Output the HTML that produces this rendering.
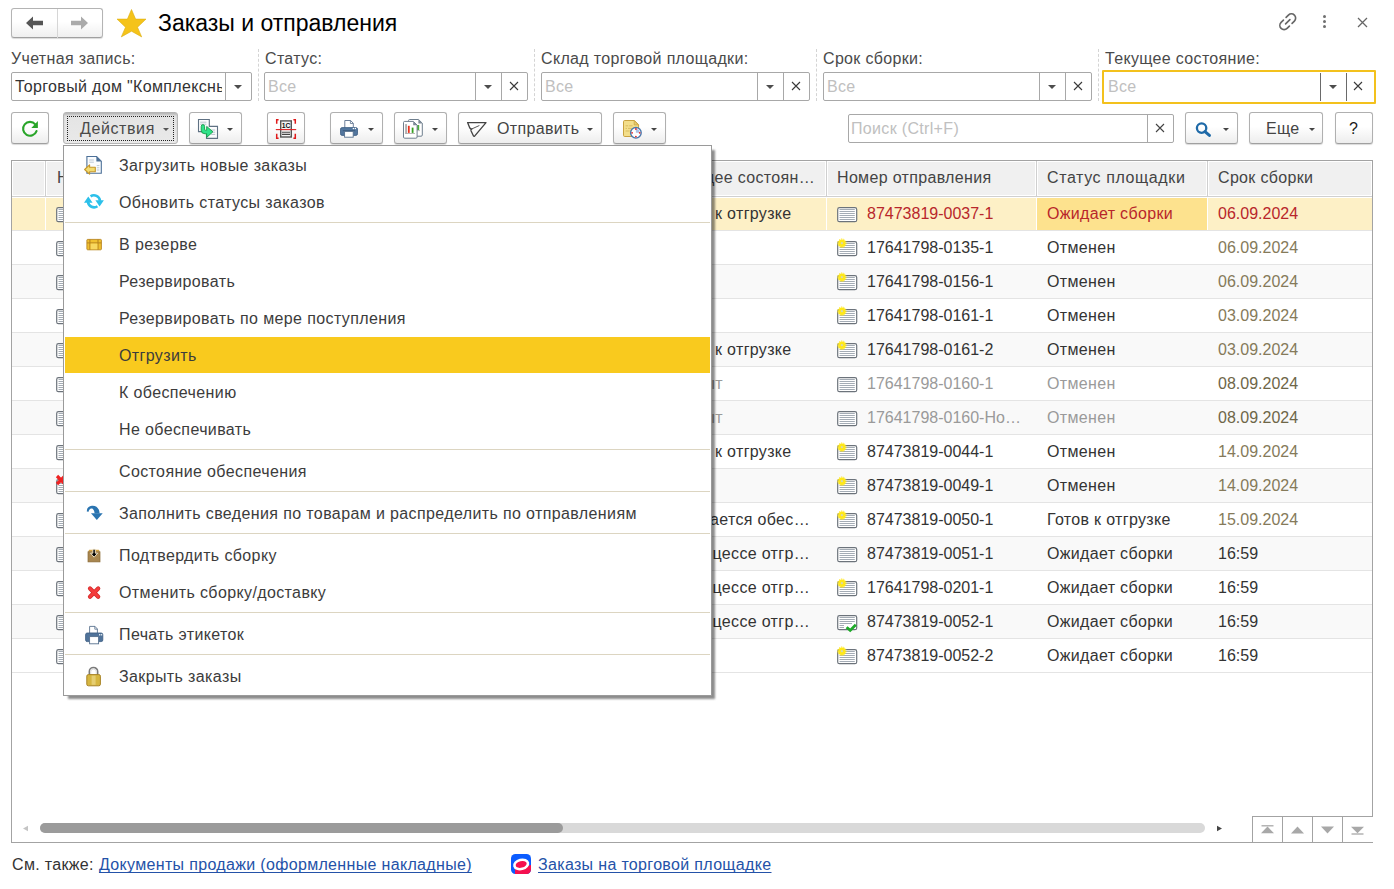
<!DOCTYPE html>
<html><head><meta charset="utf-8">
<style>
*{box-sizing:border-box}
html,body{margin:0;padding:0}
body{width:1394px;height:889px;position:relative;overflow:hidden;background:#fff;font-family:"Liberation Sans",sans-serif;font-size:16px;color:#333;letter-spacing:0.33px}
.a{position:absolute;white-space:nowrap;line-height:18px;margin-top:1px}
.btn{position:absolute;top:112px;height:32px;border:1px solid #b0b0b0;border-bottom-color:#a0a0a0;border-radius:3px;background:linear-gradient(#fff 0%,#fff 45%,#ededed 100%);box-shadow:0 1px 1px rgba(0,0,0,.15)}
.fld{position:absolute;top:72px;height:29px;border:1px solid #a8a8a8;border-radius:2px;background:#fff;overflow:hidden}
.lbl{position:absolute;top:50px;line-height:18px;color:#4a4a4a;white-space:nowrap}
.sep{position:absolute;top:49px;height:52px;width:0;border-left:1px dashed #d4d4d4}
.dv{position:absolute;top:0;bottom:0;width:1px;background:#a8a8a8}
.ph{position:absolute;left:3px;top:5px;line-height:18px;color:#c0c0c0;white-space:nowrap}
.dd{position:absolute;width:0;height:0;border-left:4px solid transparent;border-right:4px solid transparent;border-top:4px solid #4d4d4d}
.x{position:absolute;width:12px;height:12px}
</style></head><body>

<!-- header -->
<div style="position:absolute;left:11px;top:8px;width:92px;height:30px;border:1px solid #b4b4b4;border-bottom-color:#a0a0a0;border-radius:3px;background:linear-gradient(#fff 0%,#fff 45%,#efefef 100%);box-shadow:0 1px 1px rgba(0,0,0,.15)"></div>
<div style="position:absolute;left:57px;top:9px;width:1px;height:29px;background:#d6d6d6"></div>
<svg style="position:absolute;left:25px;top:15px" width="20" height="16" viewBox="0 0 20 16"><path d="M1 8 L8 1.5 L8 5.8 L18 5.8 L18 10.2 L8 10.2 L8 14.5 Z" fill="#555"/></svg>
<svg style="position:absolute;left:69px;top:15px" width="20" height="16" viewBox="0 0 20 16"><path d="M19 8 L12 1.5 L12 5.8 L2 5.8 L2 10.2 L12 10.2 L12 14.5 Z" fill="#aaa"/></svg>
<svg style="position:absolute;left:116px;top:8px" width="31" height="30" viewBox="0 0 31 30"><path d="M15.5 1.5 L19.6 11.1 L30 11.1 L21.5 19.2 L25.7 28.9 L15.5 23.2 L5.3 28.9 L9.5 19.2 L1 11.1 L11.4 11.1 Z" fill="#f5c31a" stroke="#dcae10" stroke-width="0.6" stroke-linejoin="miter"/></svg>
<div class="a" style="left:158px;top:9px;font-size:23px;line-height:27px;color:#000;letter-spacing:0">Заказы и отправления</div>

<svg style="position:absolute;left:1276px;top:10px" width="23.5" height="23.5" viewBox="0 0 20 20"><g transform="rotate(-45 10 10)" fill="none" stroke="#666" stroke-width="1.4" stroke-linecap="round"><path d="M8.4 6.4 H5.6 A3.6 3.6 0 0 0 5.6 13.6 H8.4"/><path d="M11.6 6.4 H14.4 A3.6 3.6 0 0 1 14.4 13.6 H11.6"/><path d="M7.4 10 H12.6"/></g></svg>
<div style="position:absolute;left:1323px;top:15px;width:3px;height:3px;border-radius:50%;background:#707070"></div>
<div style="position:absolute;left:1323px;top:20px;width:3px;height:3px;border-radius:50%;background:#707070"></div>
<div style="position:absolute;left:1323px;top:25px;width:3px;height:3px;border-radius:50%;background:#707070"></div>
<svg style="position:absolute;left:1357px;top:17px" width="11" height="11" viewBox="0 0 11 11"><path d="M1 1 L10 10 M10 1 L1 10" stroke="#666" stroke-width="1.25"/></svg>

<!-- filters -->
<div class="lbl" style="left:11px">Учетная запись:</div>
<div class="fld" style="left:11px;width:241px"><div class="a" style="left:3px;top:4px;color:#333;width:207px;overflow:hidden">Торговый дом "Комплексный</div><div class="dv" style="left:213px"></div><div class="dd" style="left:222px;top:12px"></div></div>
<div class="sep" style="left:258px"></div>

<div class="lbl" style="left:265px">Статус:</div>
<div class="fld" style="left:264px;width:264px"><div class="ph">Все</div><div class="dv" style="left:210px"></div><div class="dd" style="left:219px;top:12px"></div><div class="dv" style="left:236px"></div><svg class="x" style="left:243px;top:7px" viewBox="0 0 12 12"><path d="M2 2 L10 10 M10 2 L2 10" stroke="#3a3a3a" stroke-width="1.1"/></svg></div>
<div class="sep" style="left:534px"></div>

<div class="lbl" style="left:541px">Склад торговой площадки:</div>
<div class="fld" style="left:541px;width:269px"><div class="ph">Все</div><div class="dv" style="left:215px"></div><div class="dd" style="left:224px;top:12px"></div><div class="dv" style="left:241px"></div><svg class="x" style="left:248px;top:7px" viewBox="0 0 12 12"><path d="M2 2 L10 10 M10 2 L2 10" stroke="#3a3a3a" stroke-width="1.1"/></svg></div>
<div class="sep" style="left:816px"></div>

<div class="lbl" style="left:823px">Срок сборки:</div>
<div class="fld" style="left:823px;width:269px"><div class="ph">Все</div><div class="dv" style="left:215px"></div><div class="dd" style="left:224px;top:12px"></div><div class="dv" style="left:241px"></div><svg class="x" style="left:248px;top:7px" viewBox="0 0 12 12"><path d="M2 2 L10 10 M10 2 L2 10" stroke="#3a3a3a" stroke-width="1.1"/></svg></div>
<div class="sep" style="left:1098px"></div>

<div class="lbl" style="left:1105px">Текущее состояние:</div>
<div class="fld" style="left:1102px;top:70px;width:274px;height:34px;border:2px solid #f3c11d;border-radius:1px"><div class="ph" style="left:4px;top:6px">Все</div><div class="dv" style="left:216px;top:1px;bottom:1px;background:#6a6a6a"></div><div class="dd" style="left:225px;top:13px"></div><div class="dv" style="left:242px;top:1px;bottom:1px;background:#6a6a6a"></div><svg class="x" style="left:248px;top:8px" viewBox="0 0 12 12"><path d="M2 2 L10 10 M10 2 L2 10" stroke="#3a3a3a" stroke-width="1.1"/></svg></div>


<div class="btn" style="left:11px;width:38px"></div>
<svg style="position:absolute;left:21px;top:120px" width="18" height="18" viewBox="0 0 18 18"><path d="M15.52 11.05 A6.9 6.9 0 1 1 14.29 4.36" fill="none" stroke="#2aa52a" stroke-width="2.1" stroke-linecap="round"/><path d="M10.3 7.9 L16.9 7.9 L16.9 1.1 Z" fill="#2aa52a"/></svg>

<div style="position:absolute;left:63px;top:112px;width:115px;height:32px;border:1px solid #b4b4b4;border-radius:3px;background:linear-gradient(#d0d0d0,#e4e4e4 3px,#e9e9e9);box-shadow:inset 0 2px 2px rgba(0,0,0,.12)"></div>
<div style="position:absolute;left:67px;top:116px;width:107px;height:25px;border:1px dotted #222"></div>
<div class="a" style="left:80px;top:119px;color:#4a4a4a;letter-spacing:0.6px">Действия</div>
<div class="dd" style="left:163px;top:128px;border-left-width:3px;border-right-width:3px;border-top-width:3px;border-top-color:#555"></div>

<div class="btn" style="left:189px;width:53px"></div>
<svg style="position:absolute;left:197px;top:118px" width="22" height="22" viewBox="0 0 22 22"><path d="M1.5 1.5 H12.3 V8.4 H20.5 V20.4 H9.5 V13.6 H1.5 Z" fill="#fbfcfd" stroke="#5f7183" stroke-width="1.1"/><path d="M3.2 4.2 H9.4 M3.2 6.2 H9.4 M14.2 12 H18.2 M14.2 14.2 H18.2 M14.2 16.4 H18.2" stroke="#a7b3bf" stroke-width="0.8"/><path d="M4.2 8.6 Q4.2 6.6 5.9 6.6 Q7.6 6.6 7.6 8.6 L7.6 11.6 Q7.6 12.2 8.3 12.2 L9.7 12.2 L9.7 8.4 L15.9 13.8 L9.7 19.4 L9.7 15.8 L8.1 15.8 Q4.2 15.8 4.2 12.2 Z" fill="#2fe38a" stroke="#139a45" stroke-width="0.9" stroke-linejoin="round"/></svg>
<div class="dd" style="left:227px;top:128px;border-left-width:3px;border-right-width:3px;border-top-width:3px;border-top-color:#444"></div>

<div class="btn" style="left:267px;width:38px"></div>
<svg style="position:absolute;left:275px;top:118px" width="22" height="22" viewBox="0 0 22 22"><path d="M1.7 5.8 V1.7 H3.6 M18.4 1.7 H20.3 V5.8 M1.7 15.8 V20.3 H3.6 M18.4 20.3 H20.3 V15.8" fill="none" stroke="#e01a1a" stroke-width="1.5"/><rect x="5.7" y="2.9" width="10.6" height="16.1" fill="#f4f4f4" stroke="#555" stroke-width="1.4"/><text x="11" y="9.8" font-family="Liberation Sans" font-weight="bold" font-size="6.8" text-anchor="middle" fill="#111" letter-spacing="-0.2">1C</text><path d="M7 14.2 h8 M7 16.4 h8" stroke="#444" stroke-width="1.1"/><path d="M0.8 11.6 H21.2" stroke="#e02020" stroke-width="1.1"/></svg>

<div class="btn" style="left:330px;width:53px"></div>
<svg style="position:absolute;left:339px;top:119px" width="21" height="21" viewBox="0 0 21 21"><path d="M5.8 1.5 H11.6 L14.3 4.3 V10 H5.8 Z" fill="#fff" stroke="#5d7390" stroke-width="0.9"/><path d="M11.4 1.5 V4.5 H14.3" fill="none" stroke="#5d7390" stroke-width="0.8"/><rect x="1.5" y="8.6" width="17" height="7.8" rx="1.6" fill="#52769e" stroke="#3b5c82" stroke-width="0.8"/><path d="M3.8 11.7 H16.2" stroke="#3b5a7e" stroke-width="1"/><rect x="5.6" y="12.4" width="8.6" height="5.8" fill="#fff" stroke="#56708e" stroke-width="0.9"/><circle cx="14.4" cy="9.6" r="0.75" fill="#fff"/><circle cx="16.4" cy="9.6" r="0.75" fill="#fff"/></svg>
<div class="dd" style="left:368px;top:128px;border-left-width:3px;border-right-width:3px;border-top-width:3px;border-top-color:#444"></div>

<div class="btn" style="left:394px;width:53px"></div>
<svg style="position:absolute;left:402px;top:118px" width="22" height="22" viewBox="0 0 22 22"><path d="M7.7 1.5 H16.6 L20.3 5.2 V17 Q20.3 18.2 19.1 18.2 H7.7 Q6.5 18.2 6.5 17 V2.7 Q6.5 1.5 7.7 1.5 Z" fill="#fff" stroke="#6f7f8e" stroke-width="1"/><path d="M16.4 1.6 V5.4 H20.2 Z" fill="#7d8a97"/><rect x="15" y="7" width="2.2" height="5.2" fill="#4caf3a"/><rect x="14.6" y="12.2" width="3.4" height="0.9" fill="#bbb"/><path d="M2.7 3.4 H11.4 L15.1 7.1 V19 Q15.1 20.2 13.9 20.2 H2.7 Q1.5 20.2 1.5 19 V4.6 Q1.5 3.4 2.7 3.4 Z" fill="#fff" stroke="#6f7f8e" stroke-width="1"/><path d="M11.2 3.5 V7.3 H15 Z" fill="#7d8a97"/><rect x="3.2" y="6.1" width="1.7" height="9.7" fill="#a8a8a8"/><rect x="5.9" y="7.8" width="1.8" height="7.1" fill="#e8321e"/><rect x="9.7" y="9.6" width="1.8" height="5.3" fill="#34a020"/><rect x="3.2" y="15.1" width="9.8" height="0.8" fill="#a8a8a8"/></svg>
<div class="dd" style="left:432px;top:128px;border-left-width:3px;border-right-width:3px;border-top-width:3px;border-top-color:#444"></div>

<div class="btn" style="left:458px;width:144px"></div>
<svg style="position:absolute;left:466px;top:120px" width="22" height="19" viewBox="0 0 22 19"><path d="M1.6 2.6 H20 L8.6 16.1 Q8 16.8 7.5 16 L5 10.8 Q4.6 9.6 5.9 8.9 Q4.4 9.2 3.8 7.9 Z" fill="none" stroke="#444" stroke-width="1.35" stroke-linejoin="round"/><path d="M5.9 8.9 L13.4 5.5" stroke="#444" stroke-width="0.9"/></svg>
<div class="a" style="left:497px;top:119px;color:#444">Отправить</div>
<div class="dd" style="left:587px;top:128px;border-left-width:3px;border-right-width:3px;border-top-width:3px;border-top-color:#444"></div>

<div class="btn" style="left:613px;width:53px"></div>
<svg style="position:absolute;left:622px;top:119px" width="21" height="21" viewBox="0 0 21 21"><path d="M2.7 1.5 H12.4 L16.6 5.7 V16.3 Q16.6 17.5 15.4 17.5 H2.7 Q1.5 17.5 1.5 16.3 V2.7 Q1.5 1.5 2.7 1.5 Z" fill="#f3de8a" stroke="#c9a240" stroke-width="1"/><path d="M12.2 1.7 V5.9 H16.4 Z" fill="#e8cc6c" stroke="#c9a240" stroke-width="0.7"/><path d="M3.6 6.8 H6.2 M7.2 6.8 H10.6 M3.6 9.4 H5 M6 9.4 H9.6 M3.6 12 H7.6" stroke="#d6b85c" stroke-width="0.9"/><circle cx="13.9" cy="13.8" r="5.3" fill="#fff" stroke="#4a78ad" stroke-width="1.4"/><path d="M13.9 13.8 V10 A3.8 3.8 0 0 1 17.7 13.8 Z" fill="#a9c1e6"/><circle cx="13.9" cy="10" r="0.9" fill="#e02828"/><circle cx="17.7" cy="13.8" r="0.9" fill="#e02828"/><circle cx="10.1" cy="13.8" r="0.9" fill="#e02828"/><circle cx="13.9" cy="17.6" r="0.9" fill="#e02828"/></svg>
<div class="dd" style="left:651px;top:128px;border-left-width:3px;border-right-width:3px;border-top-width:3px;border-top-color:#444"></div>

<div class="fld" style="left:848px;top:114px;width:326px;height:29px"><div class="ph" style="left:2px;top:5px">Поиск (Ctrl+F)</div><div class="dv" style="left:298px"></div><svg class="x" style="left:306px;top:8px;width:10px;height:10px" viewBox="0 0 10 10"><path d="M1 1 L9 9 M9 1 L1 9" stroke="#444" stroke-width="1.1"/></svg></div>

<div class="btn" style="left:1185px;width:53px"></div>
<svg style="position:absolute;left:1195px;top:122px" width="17" height="15" viewBox="0 0 17 15"><circle cx="6.6" cy="6.1" r="4.7" fill="none" stroke="#1f6aa8" stroke-width="2.3"/><path d="M10 9.6 L14.4 13.4" stroke="#1f6aa8" stroke-width="3" stroke-linecap="round"/></svg>
<div class="dd" style="left:1223px;top:128px;border-left-width:3px;border-right-width:3px;border-top-width:3px;border-top-color:#444"></div>

<div class="btn" style="left:1249px;width:74px"></div>
<div class="a" style="left:1266px;top:119px;color:#444">Еще</div>
<div class="dd" style="left:1309px;top:128px;border-left-width:3px;border-right-width:3px;border-top-width:3px;border-top-color:#444"></div>

<div class="btn" style="left:1335px;width:38px"></div>
<div class="a" style="left:1349px;top:119px;color:#1a1a1a">?</div>


<!--TABLE-->
<div style="position:absolute;left:11px;top:160px;width:1362px;height:683px;border:1px solid #a3a3a3;background:#fff"></div>
<div style="position:absolute;left:12px;top:161px;width:1360px;height:35px;background:#f0f0f0;border:1px solid #fff;border-bottom:1px solid #fff"></div>
<div style="position:absolute;left:12px;top:196px;width:1360px;height:1px;background:#d0d0d0"></div>
<div style="position:absolute;left:44px;top:161px;width:3px;height:35px;background:#fff"></div>
<div style="position:absolute;left:45px;top:161px;width:1px;height:35px;background:#cfcfcf"></div>
<div style="position:absolute;left:825px;top:161px;width:3px;height:35px;background:#fff"></div>
<div style="position:absolute;left:826px;top:161px;width:1px;height:35px;background:#cfcfcf"></div>
<div style="position:absolute;left:1035px;top:161px;width:3px;height:35px;background:#fff"></div>
<div style="position:absolute;left:1036px;top:161px;width:1px;height:35px;background:#cfcfcf"></div>
<div style="position:absolute;left:1206px;top:161px;width:3px;height:35px;background:#fff"></div>
<div style="position:absolute;left:1207px;top:161px;width:1px;height:35px;background:#cfcfcf"></div>
<div class="a" style="left:57px;top:168px;color:#444">Номер</div>
<div class="a" style="left:615px;top:168px;width:200px;text-align:right;color:#444">Текущее состоян…</div>
<div class="a" style="left:837px;top:168px;color:#444">Номер отправления</div>
<div class="a" style="left:1047px;top:168px;color:#444;letter-spacing:0.6px">Статус площадки</div>
<div class="a" style="left:1218px;top:168px;color:#444">Срок сборки</div>
<div style="position:absolute;left:12px;top:197px;width:1360px;height:33px;background:#fdf0c6"></div>
<div style="position:absolute;left:12px;top:230px;width:1360px;height:1px;background:#e4e4e4"></div>
<div style="position:absolute;left:1037px;top:198px;width:170px;height:32px;background:#fde28e"></div>
<div style="position:absolute;left:45px;top:197px;width:1px;height:33px;background:#fff"></div>
<div style="position:absolute;left:826px;top:197px;width:1px;height:33px;background:#fff"></div>
<div style="position:absolute;left:1036px;top:197px;width:1px;height:33px;background:#fff"></div>
<div style="position:absolute;left:1207px;top:197px;width:1px;height:33px;background:#fff"></div>
<div style="position:absolute;left:12px;top:197px;width:1360px;height:1px;background:#fff"></div>
<svg style="position:absolute;left:56px;top:207px;overflow:visible" width="22" height="18" viewBox="0 0 22 18"><rect x="0.7" y="0.7" width="19" height="14" rx="1.8" fill="#fff" stroke="#6c737b" stroke-width="1.2"/><path d="M2.5 2.5 H17.8" stroke="#9aa3ad" stroke-width="0.9"/><path d="M2.5 4.5 H17.8" stroke="#9aa3ad" stroke-width="0.9"/><path d="M2.5 6.5 H17.8" stroke="#9aa3ad" stroke-width="0.9"/><path d="M2.5 8.5 H17.8" stroke="#9aa3ad" stroke-width="0.9"/><path d="M2.5 10.5 H17.8" stroke="#9aa3ad" stroke-width="0.9"/><path d="M2.5 12.5 H17.8" stroke="#9aa3ad" stroke-width="0.9"/></svg>
<div class="a" style="left:715px;top:204px;color:#333">к отгрузке</div>
<svg style="position:absolute;left:837px;top:207px;overflow:visible" width="22" height="18" viewBox="0 0 22 18"><rect x="0.7" y="0.7" width="19" height="14" rx="1.8" fill="#fff" stroke="#6c737b" stroke-width="1.2"/><path d="M2.5 2.5 H17.8" stroke="#9aa3ad" stroke-width="0.9"/><path d="M2.5 4.5 H17.8" stroke="#9aa3ad" stroke-width="0.9"/><path d="M2.5 6.5 H17.8" stroke="#9aa3ad" stroke-width="0.9"/><path d="M2.5 8.5 H17.8" stroke="#9aa3ad" stroke-width="0.9"/><path d="M2.5 10.5 H17.8" stroke="#9aa3ad" stroke-width="0.9"/><path d="M2.5 12.5 H17.8" stroke="#9aa3ad" stroke-width="0.9"/></svg>
<div class="a" style="left:867px;top:204px;color:#b8262b;letter-spacing:0">87473819-0037-1</div>
<div class="a" style="left:1047px;top:204px;color:#b8262b">Ожидает сборки</div>
<div class="a" style="left:1218px;top:204px;color:#b8262b;letter-spacing:0">06.09.2024</div>
<div style="position:absolute;left:12px;top:231px;width:1360px;height:33px;background:#fff"></div>
<div style="position:absolute;left:12px;top:264px;width:1360px;height:1px;background:#e4e4e4"></div>
<svg style="position:absolute;left:56px;top:241px;overflow:visible" width="22" height="18" viewBox="0 0 22 18"><rect x="0.7" y="0.7" width="19" height="14" rx="1.8" fill="#fff" stroke="#6c737b" stroke-width="1.2"/><path d="M2.5 2.5 H17.8" stroke="#9aa3ad" stroke-width="0.9"/><path d="M2.5 4.5 H17.8" stroke="#9aa3ad" stroke-width="0.9"/><path d="M2.5 6.5 H17.8" stroke="#9aa3ad" stroke-width="0.9"/><path d="M2.5 8.5 H17.8" stroke="#9aa3ad" stroke-width="0.9"/><path d="M2.5 10.5 H17.8" stroke="#9aa3ad" stroke-width="0.9"/><path d="M2.5 12.5 H17.8" stroke="#9aa3ad" stroke-width="0.9"/></svg>
<svg style="position:absolute;left:837px;top:241px;overflow:visible" width="22" height="18" viewBox="0 0 22 18"><rect x="0.7" y="0.7" width="19" height="14" rx="1.8" fill="#fff" stroke="#6c737b" stroke-width="1.2"/><path d="M2.5 2.5 H17.8" stroke="#9aa3ad" stroke-width="0.9"/><path d="M2.5 4.5 H17.8" stroke="#9aa3ad" stroke-width="0.9"/><path d="M2.5 6.5 H17.8" stroke="#9aa3ad" stroke-width="0.9"/><path d="M2.5 8.5 H17.8" stroke="#9aa3ad" stroke-width="0.9"/><path d="M2.5 10.5 H17.8" stroke="#9aa3ad" stroke-width="0.9"/><path d="M2.5 12.5 H17.8" stroke="#9aa3ad" stroke-width="0.9"/><circle cx="4.9" cy="2.2" r="3.7" fill="#ffe81a"/><circle cx="4.9" cy="2.2" r="4.2" fill="none" stroke="#ffe81a" stroke-width="1" stroke-dasharray="1.3 1"/><circle cx="4.9" cy="2.2" r="1.1" fill="#d8d6b0"/></svg>
<div class="a" style="left:867px;top:238px;color:#333;letter-spacing:0">17641798-0135-1</div>
<div class="a" style="left:1047px;top:238px;color:#333">Отменен</div>
<div class="a" style="left:1218px;top:238px;color:#857a5a;letter-spacing:0">06.09.2024</div>
<div style="position:absolute;left:12px;top:265px;width:1360px;height:33px;background:#f9f9f9"></div>
<div style="position:absolute;left:12px;top:298px;width:1360px;height:1px;background:#e4e4e4"></div>
<svg style="position:absolute;left:56px;top:275px;overflow:visible" width="22" height="18" viewBox="0 0 22 18"><rect x="0.7" y="0.7" width="19" height="14" rx="1.8" fill="#fff" stroke="#6c737b" stroke-width="1.2"/><path d="M2.5 2.5 H17.8" stroke="#9aa3ad" stroke-width="0.9"/><path d="M2.5 4.5 H17.8" stroke="#9aa3ad" stroke-width="0.9"/><path d="M2.5 6.5 H17.8" stroke="#9aa3ad" stroke-width="0.9"/><path d="M2.5 8.5 H17.8" stroke="#9aa3ad" stroke-width="0.9"/><path d="M2.5 10.5 H17.8" stroke="#9aa3ad" stroke-width="0.9"/><path d="M2.5 12.5 H17.8" stroke="#9aa3ad" stroke-width="0.9"/></svg>
<svg style="position:absolute;left:837px;top:275px;overflow:visible" width="22" height="18" viewBox="0 0 22 18"><rect x="0.7" y="0.7" width="19" height="14" rx="1.8" fill="#fff" stroke="#6c737b" stroke-width="1.2"/><path d="M2.5 2.5 H17.8" stroke="#9aa3ad" stroke-width="0.9"/><path d="M2.5 4.5 H17.8" stroke="#9aa3ad" stroke-width="0.9"/><path d="M2.5 6.5 H17.8" stroke="#9aa3ad" stroke-width="0.9"/><path d="M2.5 8.5 H17.8" stroke="#9aa3ad" stroke-width="0.9"/><path d="M2.5 10.5 H17.8" stroke="#9aa3ad" stroke-width="0.9"/><path d="M2.5 12.5 H17.8" stroke="#9aa3ad" stroke-width="0.9"/><circle cx="4.9" cy="2.2" r="3.7" fill="#ffe81a"/><circle cx="4.9" cy="2.2" r="4.2" fill="none" stroke="#ffe81a" stroke-width="1" stroke-dasharray="1.3 1"/><circle cx="4.9" cy="2.2" r="1.1" fill="#d8d6b0"/></svg>
<div class="a" style="left:867px;top:272px;color:#333;letter-spacing:0">17641798-0156-1</div>
<div class="a" style="left:1047px;top:272px;color:#333">Отменен</div>
<div class="a" style="left:1218px;top:272px;color:#857a5a;letter-spacing:0">06.09.2024</div>
<div style="position:absolute;left:12px;top:299px;width:1360px;height:33px;background:#fff"></div>
<div style="position:absolute;left:12px;top:332px;width:1360px;height:1px;background:#e4e4e4"></div>
<svg style="position:absolute;left:56px;top:309px;overflow:visible" width="22" height="18" viewBox="0 0 22 18"><rect x="0.7" y="0.7" width="19" height="14" rx="1.8" fill="#fff" stroke="#6c737b" stroke-width="1.2"/><path d="M2.5 2.5 H17.8" stroke="#9aa3ad" stroke-width="0.9"/><path d="M2.5 4.5 H17.8" stroke="#9aa3ad" stroke-width="0.9"/><path d="M2.5 6.5 H17.8" stroke="#9aa3ad" stroke-width="0.9"/><path d="M2.5 8.5 H17.8" stroke="#9aa3ad" stroke-width="0.9"/><path d="M2.5 10.5 H17.8" stroke="#9aa3ad" stroke-width="0.9"/><path d="M2.5 12.5 H17.8" stroke="#9aa3ad" stroke-width="0.9"/></svg>
<svg style="position:absolute;left:837px;top:309px;overflow:visible" width="22" height="18" viewBox="0 0 22 18"><rect x="0.7" y="0.7" width="19" height="14" rx="1.8" fill="#fff" stroke="#6c737b" stroke-width="1.2"/><path d="M2.5 2.5 H17.8" stroke="#9aa3ad" stroke-width="0.9"/><path d="M2.5 4.5 H17.8" stroke="#9aa3ad" stroke-width="0.9"/><path d="M2.5 6.5 H17.8" stroke="#9aa3ad" stroke-width="0.9"/><path d="M2.5 8.5 H17.8" stroke="#9aa3ad" stroke-width="0.9"/><path d="M2.5 10.5 H17.8" stroke="#9aa3ad" stroke-width="0.9"/><path d="M2.5 12.5 H17.8" stroke="#9aa3ad" stroke-width="0.9"/><circle cx="4.9" cy="2.2" r="3.7" fill="#ffe81a"/><circle cx="4.9" cy="2.2" r="4.2" fill="none" stroke="#ffe81a" stroke-width="1" stroke-dasharray="1.3 1"/><circle cx="4.9" cy="2.2" r="1.1" fill="#d8d6b0"/></svg>
<div class="a" style="left:867px;top:306px;color:#333;letter-spacing:0">17641798-0161-1</div>
<div class="a" style="left:1047px;top:306px;color:#333">Отменен</div>
<div class="a" style="left:1218px;top:306px;color:#857a5a;letter-spacing:0">03.09.2024</div>
<div style="position:absolute;left:12px;top:333px;width:1360px;height:33px;background:#f9f9f9"></div>
<div style="position:absolute;left:12px;top:366px;width:1360px;height:1px;background:#e4e4e4"></div>
<svg style="position:absolute;left:56px;top:343px;overflow:visible" width="22" height="18" viewBox="0 0 22 18"><rect x="0.7" y="0.7" width="19" height="14" rx="1.8" fill="#fff" stroke="#6c737b" stroke-width="1.2"/><path d="M2.5 2.5 H17.8" stroke="#9aa3ad" stroke-width="0.9"/><path d="M2.5 4.5 H17.8" stroke="#9aa3ad" stroke-width="0.9"/><path d="M2.5 6.5 H17.8" stroke="#9aa3ad" stroke-width="0.9"/><path d="M2.5 8.5 H17.8" stroke="#9aa3ad" stroke-width="0.9"/><path d="M2.5 10.5 H17.8" stroke="#9aa3ad" stroke-width="0.9"/><path d="M2.5 12.5 H17.8" stroke="#9aa3ad" stroke-width="0.9"/></svg>
<div class="a" style="left:715px;top:340px;color:#333">к отгрузке</div>
<svg style="position:absolute;left:837px;top:343px;overflow:visible" width="22" height="18" viewBox="0 0 22 18"><rect x="0.7" y="0.7" width="19" height="14" rx="1.8" fill="#fff" stroke="#6c737b" stroke-width="1.2"/><path d="M2.5 2.5 H17.8" stroke="#9aa3ad" stroke-width="0.9"/><path d="M2.5 4.5 H17.8" stroke="#9aa3ad" stroke-width="0.9"/><path d="M2.5 6.5 H17.8" stroke="#9aa3ad" stroke-width="0.9"/><path d="M2.5 8.5 H17.8" stroke="#9aa3ad" stroke-width="0.9"/><path d="M2.5 10.5 H17.8" stroke="#9aa3ad" stroke-width="0.9"/><path d="M2.5 12.5 H17.8" stroke="#9aa3ad" stroke-width="0.9"/><circle cx="4.9" cy="2.2" r="3.7" fill="#ffe81a"/><circle cx="4.9" cy="2.2" r="4.2" fill="none" stroke="#ffe81a" stroke-width="1" stroke-dasharray="1.3 1"/><circle cx="4.9" cy="2.2" r="1.1" fill="#d8d6b0"/></svg>
<div class="a" style="left:867px;top:340px;color:#333;letter-spacing:0">17641798-0161-2</div>
<div class="a" style="left:1047px;top:340px;color:#333">Отменен</div>
<div class="a" style="left:1218px;top:340px;color:#857a5a;letter-spacing:0">03.09.2024</div>
<div style="position:absolute;left:12px;top:367px;width:1360px;height:33px;background:#fff"></div>
<div style="position:absolute;left:12px;top:400px;width:1360px;height:1px;background:#e4e4e4"></div>
<svg style="position:absolute;left:56px;top:377px;overflow:visible" width="22" height="18" viewBox="0 0 22 18"><rect x="0.7" y="0.7" width="19" height="14" rx="1.8" fill="#fff" stroke="#6c737b" stroke-width="1.2"/><path d="M2.5 2.5 H17.8" stroke="#9aa3ad" stroke-width="0.9"/><path d="M2.5 4.5 H17.8" stroke="#9aa3ad" stroke-width="0.9"/><path d="M2.5 6.5 H17.8" stroke="#9aa3ad" stroke-width="0.9"/><path d="M2.5 8.5 H17.8" stroke="#9aa3ad" stroke-width="0.9"/><path d="M2.5 10.5 H17.8" stroke="#9aa3ad" stroke-width="0.9"/><path d="M2.5 12.5 H17.8" stroke="#9aa3ad" stroke-width="0.9"/></svg>
<div class="a" style="left:523px;top:374px;width:200px;text-align:right;color:#9a9a9a">Закрыт</div>
<svg style="position:absolute;left:837px;top:377px;overflow:visible" width="22" height="18" viewBox="0 0 22 18"><rect x="0.7" y="0.7" width="19" height="14" rx="1.8" fill="#fff" stroke="#6c737b" stroke-width="1.2"/><path d="M2.5 2.5 H17.8" stroke="#9aa3ad" stroke-width="0.9"/><path d="M2.5 4.5 H17.8" stroke="#9aa3ad" stroke-width="0.9"/><path d="M2.5 6.5 H17.8" stroke="#9aa3ad" stroke-width="0.9"/><path d="M2.5 8.5 H17.8" stroke="#9aa3ad" stroke-width="0.9"/><path d="M2.5 10.5 H17.8" stroke="#9aa3ad" stroke-width="0.9"/><path d="M2.5 12.5 H17.8" stroke="#9aa3ad" stroke-width="0.9"/></svg>
<div class="a" style="left:867px;top:374px;color:#9a9a9a;letter-spacing:0">17641798-0160-1</div>
<div class="a" style="left:1047px;top:374px;color:#9a9a9a">Отменен</div>
<div class="a" style="left:1218px;top:374px;color:#6e6648;letter-spacing:0">08.09.2024</div>
<div style="position:absolute;left:12px;top:401px;width:1360px;height:33px;background:#f9f9f9"></div>
<div style="position:absolute;left:12px;top:434px;width:1360px;height:1px;background:#e4e4e4"></div>
<svg style="position:absolute;left:56px;top:411px;overflow:visible" width="22" height="18" viewBox="0 0 22 18"><rect x="0.7" y="0.7" width="19" height="14" rx="1.8" fill="#fff" stroke="#6c737b" stroke-width="1.2"/><path d="M2.5 2.5 H17.8" stroke="#9aa3ad" stroke-width="0.9"/><path d="M2.5 4.5 H17.8" stroke="#9aa3ad" stroke-width="0.9"/><path d="M2.5 6.5 H17.8" stroke="#9aa3ad" stroke-width="0.9"/><path d="M2.5 8.5 H17.8" stroke="#9aa3ad" stroke-width="0.9"/><path d="M2.5 10.5 H17.8" stroke="#9aa3ad" stroke-width="0.9"/><path d="M2.5 12.5 H17.8" stroke="#9aa3ad" stroke-width="0.9"/></svg>
<div class="a" style="left:523px;top:408px;width:200px;text-align:right;color:#9a9a9a">Закрыт</div>
<svg style="position:absolute;left:837px;top:411px;overflow:visible" width="22" height="18" viewBox="0 0 22 18"><rect x="0.7" y="0.7" width="19" height="14" rx="1.8" fill="#fff" stroke="#6c737b" stroke-width="1.2"/><path d="M2.5 2.5 H17.8" stroke="#9aa3ad" stroke-width="0.9"/><path d="M2.5 4.5 H17.8" stroke="#9aa3ad" stroke-width="0.9"/><path d="M2.5 6.5 H17.8" stroke="#9aa3ad" stroke-width="0.9"/><path d="M2.5 8.5 H17.8" stroke="#9aa3ad" stroke-width="0.9"/><path d="M2.5 10.5 H17.8" stroke="#9aa3ad" stroke-width="0.9"/><path d="M2.5 12.5 H17.8" stroke="#9aa3ad" stroke-width="0.9"/></svg>
<div class="a" style="left:867px;top:408px;color:#9a9a9a;letter-spacing:0">17641798-0160-Но…</div>
<div class="a" style="left:1047px;top:408px;color:#9a9a9a">Отменен</div>
<div class="a" style="left:1218px;top:408px;color:#6e6648;letter-spacing:0">08.09.2024</div>
<div style="position:absolute;left:12px;top:435px;width:1360px;height:33px;background:#fff"></div>
<div style="position:absolute;left:12px;top:468px;width:1360px;height:1px;background:#e4e4e4"></div>
<svg style="position:absolute;left:56px;top:445px;overflow:visible" width="22" height="18" viewBox="0 0 22 18"><rect x="0.7" y="0.7" width="19" height="14" rx="1.8" fill="#fff" stroke="#6c737b" stroke-width="1.2"/><path d="M2.5 2.5 H17.8" stroke="#9aa3ad" stroke-width="0.9"/><path d="M2.5 4.5 H17.8" stroke="#9aa3ad" stroke-width="0.9"/><path d="M2.5 6.5 H17.8" stroke="#9aa3ad" stroke-width="0.9"/><path d="M2.5 8.5 H17.8" stroke="#9aa3ad" stroke-width="0.9"/><path d="M2.5 10.5 H17.8" stroke="#9aa3ad" stroke-width="0.9"/><path d="M2.5 12.5 H17.8" stroke="#9aa3ad" stroke-width="0.9"/></svg>
<div class="a" style="left:715px;top:442px;color:#333">к отгрузке</div>
<svg style="position:absolute;left:837px;top:445px;overflow:visible" width="22" height="18" viewBox="0 0 22 18"><rect x="0.7" y="0.7" width="19" height="14" rx="1.8" fill="#fff" stroke="#6c737b" stroke-width="1.2"/><path d="M2.5 2.5 H17.8" stroke="#9aa3ad" stroke-width="0.9"/><path d="M2.5 4.5 H17.8" stroke="#9aa3ad" stroke-width="0.9"/><path d="M2.5 6.5 H17.8" stroke="#9aa3ad" stroke-width="0.9"/><path d="M2.5 8.5 H17.8" stroke="#9aa3ad" stroke-width="0.9"/><path d="M2.5 10.5 H17.8" stroke="#9aa3ad" stroke-width="0.9"/><path d="M2.5 12.5 H17.8" stroke="#9aa3ad" stroke-width="0.9"/><circle cx="4.9" cy="2.2" r="3.7" fill="#ffe81a"/><circle cx="4.9" cy="2.2" r="4.2" fill="none" stroke="#ffe81a" stroke-width="1" stroke-dasharray="1.3 1"/><circle cx="4.9" cy="2.2" r="1.1" fill="#d8d6b0"/></svg>
<div class="a" style="left:867px;top:442px;color:#333;letter-spacing:0">87473819-0044-1</div>
<div class="a" style="left:1047px;top:442px;color:#333">Отменен</div>
<div class="a" style="left:1218px;top:442px;color:#857a5a;letter-spacing:0">14.09.2024</div>
<div style="position:absolute;left:12px;top:469px;width:1360px;height:33px;background:#f9f9f9"></div>
<div style="position:absolute;left:12px;top:502px;width:1360px;height:1px;background:#e4e4e4"></div>
<svg style="position:absolute;left:56px;top:479px;overflow:visible" width="22" height="18" viewBox="0 0 22 18"><rect x="0.7" y="0.7" width="19" height="14" rx="1.8" fill="#fff" stroke="#6c737b" stroke-width="1.2"/><path d="M2.5 2.5 H17.8" stroke="#9aa3ad" stroke-width="0.9"/><path d="M2.5 4.5 H17.8" stroke="#9aa3ad" stroke-width="0.9"/><path d="M2.5 6.5 H17.8" stroke="#9aa3ad" stroke-width="0.9"/><path d="M2.5 8.5 H17.8" stroke="#9aa3ad" stroke-width="0.9"/><path d="M2.5 10.5 H17.8" stroke="#9aa3ad" stroke-width="0.9"/><path d="M2.5 12.5 H17.8" stroke="#9aa3ad" stroke-width="0.9"/></svg>
<svg style="position:absolute;left:55px;top:474px" width="12" height="12" viewBox="0 0 12 12"><path d="M2 2 L10 10 M10 2 L2 10" stroke="#ee2222" stroke-width="3.2"/></svg>
<svg style="position:absolute;left:837px;top:479px;overflow:visible" width="22" height="18" viewBox="0 0 22 18"><rect x="0.7" y="0.7" width="19" height="14" rx="1.8" fill="#fff" stroke="#6c737b" stroke-width="1.2"/><path d="M2.5 2.5 H17.8" stroke="#9aa3ad" stroke-width="0.9"/><path d="M2.5 4.5 H17.8" stroke="#9aa3ad" stroke-width="0.9"/><path d="M2.5 6.5 H17.8" stroke="#9aa3ad" stroke-width="0.9"/><path d="M2.5 8.5 H17.8" stroke="#9aa3ad" stroke-width="0.9"/><path d="M2.5 10.5 H17.8" stroke="#9aa3ad" stroke-width="0.9"/><path d="M2.5 12.5 H17.8" stroke="#9aa3ad" stroke-width="0.9"/><circle cx="4.9" cy="2.2" r="3.7" fill="#ffe81a"/><circle cx="4.9" cy="2.2" r="4.2" fill="none" stroke="#ffe81a" stroke-width="1" stroke-dasharray="1.3 1"/><circle cx="4.9" cy="2.2" r="1.1" fill="#d8d6b0"/></svg>
<div class="a" style="left:867px;top:476px;color:#333;letter-spacing:0">87473819-0049-1</div>
<div class="a" style="left:1047px;top:476px;color:#333">Отменен</div>
<div class="a" style="left:1218px;top:476px;color:#857a5a;letter-spacing:0">14.09.2024</div>
<div style="position:absolute;left:12px;top:503px;width:1360px;height:33px;background:#fff"></div>
<div style="position:absolute;left:12px;top:536px;width:1360px;height:1px;background:#e4e4e4"></div>
<svg style="position:absolute;left:56px;top:513px;overflow:visible" width="22" height="18" viewBox="0 0 22 18"><rect x="0.7" y="0.7" width="19" height="14" rx="1.8" fill="#fff" stroke="#6c737b" stroke-width="1.2"/><path d="M2.5 2.5 H17.8" stroke="#9aa3ad" stroke-width="0.9"/><path d="M2.5 4.5 H17.8" stroke="#9aa3ad" stroke-width="0.9"/><path d="M2.5 6.5 H17.8" stroke="#9aa3ad" stroke-width="0.9"/><path d="M2.5 8.5 H17.8" stroke="#9aa3ad" stroke-width="0.9"/><path d="M2.5 10.5 H17.8" stroke="#9aa3ad" stroke-width="0.9"/><path d="M2.5 12.5 H17.8" stroke="#9aa3ad" stroke-width="0.9"/></svg>
<div class="a" style="left:610px;top:510px;width:200px;text-align:right;color:#333">ается обес…</div>
<svg style="position:absolute;left:837px;top:513px;overflow:visible" width="22" height="18" viewBox="0 0 22 18"><rect x="0.7" y="0.7" width="19" height="14" rx="1.8" fill="#fff" stroke="#6c737b" stroke-width="1.2"/><path d="M2.5 2.5 H17.8" stroke="#9aa3ad" stroke-width="0.9"/><path d="M2.5 4.5 H17.8" stroke="#9aa3ad" stroke-width="0.9"/><path d="M2.5 6.5 H17.8" stroke="#9aa3ad" stroke-width="0.9"/><path d="M2.5 8.5 H17.8" stroke="#9aa3ad" stroke-width="0.9"/><path d="M2.5 10.5 H17.8" stroke="#9aa3ad" stroke-width="0.9"/><path d="M2.5 12.5 H17.8" stroke="#9aa3ad" stroke-width="0.9"/><circle cx="4.9" cy="2.2" r="3.7" fill="#ffe81a"/><circle cx="4.9" cy="2.2" r="4.2" fill="none" stroke="#ffe81a" stroke-width="1" stroke-dasharray="1.3 1"/><circle cx="4.9" cy="2.2" r="1.1" fill="#d8d6b0"/></svg>
<div class="a" style="left:867px;top:510px;color:#333;letter-spacing:0">87473819-0050-1</div>
<div class="a" style="left:1047px;top:510px;color:#333">Готов к отгрузке</div>
<div class="a" style="left:1218px;top:510px;color:#857a5a;letter-spacing:0">15.09.2024</div>
<div style="position:absolute;left:12px;top:537px;width:1360px;height:33px;background:#f9f9f9"></div>
<div style="position:absolute;left:12px;top:570px;width:1360px;height:1px;background:#e4e4e4"></div>
<svg style="position:absolute;left:56px;top:547px;overflow:visible" width="22" height="18" viewBox="0 0 22 18"><rect x="0.7" y="0.7" width="19" height="14" rx="1.8" fill="#fff" stroke="#6c737b" stroke-width="1.2"/><path d="M2.5 2.5 H17.8" stroke="#9aa3ad" stroke-width="0.9"/><path d="M2.5 4.5 H17.8" stroke="#9aa3ad" stroke-width="0.9"/><path d="M2.5 6.5 H17.8" stroke="#9aa3ad" stroke-width="0.9"/><path d="M2.5 8.5 H17.8" stroke="#9aa3ad" stroke-width="0.9"/><path d="M2.5 10.5 H17.8" stroke="#9aa3ad" stroke-width="0.9"/><path d="M2.5 12.5 H17.8" stroke="#9aa3ad" stroke-width="0.9"/></svg>
<div class="a" style="left:610px;top:544px;width:200px;text-align:right;color:#333">цессе отгр…</div>
<svg style="position:absolute;left:837px;top:547px;overflow:visible" width="22" height="18" viewBox="0 0 22 18"><rect x="0.7" y="0.7" width="19" height="14" rx="1.8" fill="#fff" stroke="#6c737b" stroke-width="1.2"/><path d="M2.5 2.5 H17.8" stroke="#9aa3ad" stroke-width="0.9"/><path d="M2.5 4.5 H17.8" stroke="#9aa3ad" stroke-width="0.9"/><path d="M2.5 6.5 H17.8" stroke="#9aa3ad" stroke-width="0.9"/><path d="M2.5 8.5 H17.8" stroke="#9aa3ad" stroke-width="0.9"/><path d="M2.5 10.5 H17.8" stroke="#9aa3ad" stroke-width="0.9"/><path d="M2.5 12.5 H17.8" stroke="#9aa3ad" stroke-width="0.9"/></svg>
<div class="a" style="left:867px;top:544px;color:#333;letter-spacing:0">87473819-0051-1</div>
<div class="a" style="left:1047px;top:544px;color:#333">Ожидает сборки</div>
<div class="a" style="left:1218px;top:544px;color:#333;letter-spacing:0">16:59</div>
<div style="position:absolute;left:12px;top:571px;width:1360px;height:33px;background:#fff"></div>
<div style="position:absolute;left:12px;top:604px;width:1360px;height:1px;background:#e4e4e4"></div>
<svg style="position:absolute;left:56px;top:581px;overflow:visible" width="22" height="18" viewBox="0 0 22 18"><rect x="0.7" y="0.7" width="19" height="14" rx="1.8" fill="#fff" stroke="#6c737b" stroke-width="1.2"/><path d="M2.5 2.5 H17.8" stroke="#9aa3ad" stroke-width="0.9"/><path d="M2.5 4.5 H17.8" stroke="#9aa3ad" stroke-width="0.9"/><path d="M2.5 6.5 H17.8" stroke="#9aa3ad" stroke-width="0.9"/><path d="M2.5 8.5 H17.8" stroke="#9aa3ad" stroke-width="0.9"/><path d="M2.5 10.5 H17.8" stroke="#9aa3ad" stroke-width="0.9"/><path d="M2.5 12.5 H17.8" stroke="#9aa3ad" stroke-width="0.9"/></svg>
<div class="a" style="left:610px;top:578px;width:200px;text-align:right;color:#333">цессе отгр…</div>
<svg style="position:absolute;left:837px;top:581px;overflow:visible" width="22" height="18" viewBox="0 0 22 18"><rect x="0.7" y="0.7" width="19" height="14" rx="1.8" fill="#fff" stroke="#6c737b" stroke-width="1.2"/><path d="M2.5 2.5 H17.8" stroke="#9aa3ad" stroke-width="0.9"/><path d="M2.5 4.5 H17.8" stroke="#9aa3ad" stroke-width="0.9"/><path d="M2.5 6.5 H17.8" stroke="#9aa3ad" stroke-width="0.9"/><path d="M2.5 8.5 H17.8" stroke="#9aa3ad" stroke-width="0.9"/><path d="M2.5 10.5 H17.8" stroke="#9aa3ad" stroke-width="0.9"/><path d="M2.5 12.5 H17.8" stroke="#9aa3ad" stroke-width="0.9"/><circle cx="4.9" cy="2.2" r="3.7" fill="#ffe81a"/><circle cx="4.9" cy="2.2" r="4.2" fill="none" stroke="#ffe81a" stroke-width="1" stroke-dasharray="1.3 1"/><circle cx="4.9" cy="2.2" r="1.1" fill="#d8d6b0"/></svg>
<div class="a" style="left:867px;top:578px;color:#333;letter-spacing:0">17641798-0201-1</div>
<div class="a" style="left:1047px;top:578px;color:#333">Ожидает сборки</div>
<div class="a" style="left:1218px;top:578px;color:#333;letter-spacing:0">16:59</div>
<div style="position:absolute;left:12px;top:605px;width:1360px;height:33px;background:#f9f9f9"></div>
<div style="position:absolute;left:12px;top:638px;width:1360px;height:1px;background:#e4e4e4"></div>
<svg style="position:absolute;left:56px;top:615px;overflow:visible" width="22" height="18" viewBox="0 0 22 18"><rect x="0.7" y="0.7" width="19" height="14" rx="1.8" fill="#fff" stroke="#6c737b" stroke-width="1.2"/><path d="M2.5 2.5 H17.8" stroke="#9aa3ad" stroke-width="0.9"/><path d="M2.5 4.5 H17.8" stroke="#9aa3ad" stroke-width="0.9"/><path d="M2.5 6.5 H17.8" stroke="#9aa3ad" stroke-width="0.9"/><path d="M2.5 8.5 H17.8" stroke="#9aa3ad" stroke-width="0.9"/><path d="M2.5 10.5 H17.8" stroke="#9aa3ad" stroke-width="0.9"/><path d="M2.5 12.5 H17.8" stroke="#9aa3ad" stroke-width="0.9"/></svg>
<div class="a" style="left:610px;top:612px;width:200px;text-align:right;color:#333">цессе отгр…</div>
<svg style="position:absolute;left:837px;top:615px;overflow:visible" width="22" height="18" viewBox="0 0 22 18"><rect x="0.7" y="0.7" width="19" height="14" rx="1.8" fill="#fff" stroke="#6c737b" stroke-width="1.2"/><path d="M2.5 2.5 H17.8" stroke="#9aa3ad" stroke-width="0.9"/><path d="M2.5 4.5 H17.8" stroke="#9aa3ad" stroke-width="0.9"/><path d="M2.5 6.5 H17.8" stroke="#9aa3ad" stroke-width="0.9"/><path d="M2.5 8.5 H15" stroke="#9aa3ad" stroke-width="0.9"/><path d="M2.5 10.5 H7" stroke="#9aa3ad" stroke-width="0.9"/><path d="M2.5 12.5 H7" stroke="#9aa3ad" stroke-width="0.9"/><path d="M9.6 12.2 L13.2 15.4 L18.8 9.8" fill="none" stroke="#1eaa2a" stroke-width="2.8" stroke-linecap="butt"/></svg>
<div class="a" style="left:867px;top:612px;color:#333;letter-spacing:0">87473819-0052-1</div>
<div class="a" style="left:1047px;top:612px;color:#333">Ожидает сборки</div>
<div class="a" style="left:1218px;top:612px;color:#333;letter-spacing:0">16:59</div>
<div style="position:absolute;left:12px;top:639px;width:1360px;height:33px;background:#fff"></div>
<div style="position:absolute;left:12px;top:672px;width:1360px;height:1px;background:#e4e4e4"></div>
<svg style="position:absolute;left:56px;top:649px;overflow:visible" width="22" height="18" viewBox="0 0 22 18"><rect x="0.7" y="0.7" width="19" height="14" rx="1.8" fill="#fff" stroke="#6c737b" stroke-width="1.2"/><path d="M2.5 2.5 H17.8" stroke="#9aa3ad" stroke-width="0.9"/><path d="M2.5 4.5 H17.8" stroke="#9aa3ad" stroke-width="0.9"/><path d="M2.5 6.5 H17.8" stroke="#9aa3ad" stroke-width="0.9"/><path d="M2.5 8.5 H17.8" stroke="#9aa3ad" stroke-width="0.9"/><path d="M2.5 10.5 H17.8" stroke="#9aa3ad" stroke-width="0.9"/><path d="M2.5 12.5 H17.8" stroke="#9aa3ad" stroke-width="0.9"/></svg>
<svg style="position:absolute;left:837px;top:649px;overflow:visible" width="22" height="18" viewBox="0 0 22 18"><rect x="0.7" y="0.7" width="19" height="14" rx="1.8" fill="#fff" stroke="#6c737b" stroke-width="1.2"/><path d="M2.5 2.5 H17.8" stroke="#9aa3ad" stroke-width="0.9"/><path d="M2.5 4.5 H17.8" stroke="#9aa3ad" stroke-width="0.9"/><path d="M2.5 6.5 H17.8" stroke="#9aa3ad" stroke-width="0.9"/><path d="M2.5 8.5 H17.8" stroke="#9aa3ad" stroke-width="0.9"/><path d="M2.5 10.5 H17.8" stroke="#9aa3ad" stroke-width="0.9"/><path d="M2.5 12.5 H17.8" stroke="#9aa3ad" stroke-width="0.9"/><circle cx="4.9" cy="2.2" r="3.7" fill="#ffe81a"/><circle cx="4.9" cy="2.2" r="4.2" fill="none" stroke="#ffe81a" stroke-width="1" stroke-dasharray="1.3 1"/><circle cx="4.9" cy="2.2" r="1.1" fill="#d8d6b0"/></svg>
<div class="a" style="left:867px;top:646px;color:#333;letter-spacing:0">87473819-0052-2</div>
<div class="a" style="left:1047px;top:646px;color:#333">Ожидает сборки</div>
<div class="a" style="left:1218px;top:646px;color:#333;letter-spacing:0">16:59</div>
<svg style="position:absolute;left:22px;top:825px" width="7" height="7" viewBox="0 0 7 7"><path d="M6 0.8 L1 3.5 L6 6.2 Z" fill="#c4c4c4"/></svg>
<div style="position:absolute;left:40px;top:823px;width:1165px;height:10px;border-radius:5px;background:#d9d9d9"></div>
<div style="position:absolute;left:40px;top:823px;width:523px;height:10px;border-radius:5px;background:#9b9b9b"></div>
<svg style="position:absolute;left:1216px;top:825px" width="7" height="7" viewBox="0 0 7 7"><path d="M1 0.8 L6 3.5 L1 6.2 Z" fill="#444"/></svg>
<div style="position:absolute;left:1252px;top:816px;width:121px;height:27px;border:1px solid #a3a3a3;border-right:none;background:#fff"></div>
<div style="position:absolute;left:1282px;top:816px;width:1px;height:26px;background:#a3a3a3"></div>
<div style="position:absolute;left:1312px;top:816px;width:1px;height:26px;background:#a3a3a3"></div>
<div style="position:absolute;left:1342px;top:816px;width:1px;height:26px;background:#a3a3a3"></div>
<svg style="position:absolute;left:1260px;top:824px" width="15" height="12" viewBox="0 0 15 12"><path d="M1.5 1.8 H13.5" stroke="#a8a8a8" stroke-width="1.3"/><path d="M7.5 2.6 L14 9.2 H1 Z" fill="#a8a8a8"/></svg>
<svg style="position:absolute;left:1290px;top:824px" width="15" height="12" viewBox="0 0 15 12"><path d="M7.5 2.6 L14 9.4 H1 Z" fill="#a8a8a8"/></svg>
<svg style="position:absolute;left:1320px;top:824px" width="15" height="12" viewBox="0 0 15 12"><path d="M1 2.6 H14 L7.5 9.4 Z" fill="#a8a8a8"/></svg>
<svg style="position:absolute;left:1350px;top:824px" width="15" height="12" viewBox="0 0 15 12"><path d="M1 2.8 H14 L7.5 9.2 Z" fill="#a8a8a8"/><path d="M1.5 10 H13.5" stroke="#a8a8a8" stroke-width="1.3"/></svg>
<!--/TABLE-->

<!--MENU-->
<div style="position:absolute;left:63px;top:145px;width:649px;height:551px;border:1px solid #9a9a9a;background:#fff;box-shadow:4px 4px 2px -1px rgba(0,0,0,.45)"></div>
<div style="position:absolute;left:82px;top:154px;width:22px;height:22px"><svg width="22" height="22" viewBox="0 0 22 22"><path d="M4.9 2.5 H14.6 L19.3 7.2 V19.3 H4.9 Z" fill="#fafcfe" stroke="#4c7098" stroke-width="1.1"/><path d="M14.4 2.5 V7.4 H19.3 Z" fill="#4c7098"/><path d="M7.2 6 H11.8 M7.2 8.2 H11.8 M14.8 11.6 H17.4 M14.8 13.8 H17.4 M14.8 16 H17.4" stroke="#b5c2d0" stroke-width="0.9"/><path d="M2.6 15.5 L7.6 10.8 V13.2 H13.3 V17.8 H7.6 V20.2 Z" fill="#f2dc72" stroke="#c6962a" stroke-width="1.1" stroke-linejoin="round"/></svg></div>
<div class="a" style="left:119px;top:156px;color:#3c3c3c;letter-spacing:0.38px">Загрузить новые заказы</div>
<div style="position:absolute;left:82px;top:191px;width:22px;height:22px"><svg width="22" height="22" viewBox="0 0 22 22"><g fill="none" stroke="#2cc0ea" stroke-width="2.6"><path d="M8.56 5.39 A6 6 0 0 1 17.98 9.78"/><path d="M15.44 15.21 A6 6 0 0 1 6.02 10.82"/></g><path d="M13.4 9.2 L21.9 9.2 L17.6 15.4 Z" fill="#2cc0ea"/><path d="M2 11.8 L10.6 11.8 L6.3 5.4 Z" fill="#2cc0ea"/></svg></div>
<div class="a" style="left:119px;top:193px;color:#3c3c3c;letter-spacing:0.38px">Обновить статусы заказов</div>
<div style="position:absolute;left:65px;top:222px;width:645px;height:1px;background:#dcd5c1"></div>
<div style="position:absolute;left:82px;top:233px;width:22px;height:22px"><svg width="22" height="22" viewBox="0 0 22 22"><rect x="4.9" y="6.4" width="14.5" height="10.4" rx="0.8" fill="#f0c030" stroke="#b98620" stroke-width="0.9"/><path d="M7.9 6.4 V16.8 M16 6.4 V16.8" stroke="#b98620" stroke-width="1.1"/><path d="M4.9 9.9 H19.4" stroke="#b98620" stroke-width="1"/><rect x="8.6" y="10.6" width="6.8" height="5.6" fill="#f8d860"/></svg></div>
<div class="a" style="left:119px;top:235px;color:#3c3c3c;letter-spacing:0.38px">В резерве</div>
<div class="a" style="left:119px;top:272px;color:#3c3c3c;letter-spacing:0.38px">Резервировать</div>
<div class="a" style="left:119px;top:309px;color:#3c3c3c;letter-spacing:0.38px">Резервировать по мере поступления</div>
<div style="position:absolute;left:65px;top:337px;width:645px;height:36px;background:#f9ca1e"></div>
<div class="a" style="left:119px;top:346px;color:#3c3c3c;letter-spacing:0.38px">Отгрузить</div>
<div class="a" style="left:119px;top:383px;color:#3c3c3c;letter-spacing:0.38px">К обеспечению</div>
<div class="a" style="left:119px;top:420px;color:#3c3c3c;letter-spacing:0.38px">Не обеспечивать</div>
<div style="position:absolute;left:65px;top:449px;width:645px;height:1px;background:#dcd5c1"></div>
<div class="a" style="left:119px;top:462px;color:#3c3c3c;letter-spacing:0.38px">Состояние обеспечения</div>
<div style="position:absolute;left:65px;top:491px;width:645px;height:1px;background:#dcd5c1"></div>
<div style="position:absolute;left:82px;top:502px;width:22px;height:22px"><svg width="22" height="22" viewBox="0 0 22 22"><path d="M4.8 9.4 C4.8 5 8 3.8 10.8 3.8 C14.5 3.8 17.4 6.5 17.6 11.4 L12.6 11.4 C12.4 8.6 11.4 6.4 9.6 6.4 C8 6.4 6.8 7.8 6.6 9.8 Z" fill="#2a74b0"/><path d="M9 11.2 L20.7 11.2 L14.8 17.9 Z" fill="#2a74b0"/></svg></div>
<div class="a" style="left:119px;top:504px;color:#3c3c3c;letter-spacing:0.38px">Заполнить сведения по товарам и распределить по отправлениям</div>
<div style="position:absolute;left:65px;top:533px;width:645px;height:1px;background:#dcd5c1"></div>
<div style="position:absolute;left:82px;top:544px;width:22px;height:22px"><svg width="22" height="22" viewBox="0 0 22 22"><path d="M6 7.8 L7.2 5.8 H16.8 L18 7.8 Z" fill="#d9a640"/><rect x="6" y="7.8" width="12" height="10.1" fill="#a88650" stroke="#8a6a36" stroke-width="0.7"/><path d="M10.9 5.2 H13.3 V9.2 H15.6 L12.1 13.2 L8.6 9.2 H10.9 Z" fill="#000" stroke="#fff3d8" stroke-width="0.9"/></svg></div>
<div class="a" style="left:119px;top:546px;color:#3c3c3c;letter-spacing:0.38px">Подтвердить сборку</div>
<div style="position:absolute;left:82px;top:581px;width:22px;height:22px"><svg width="22" height="22" viewBox="0 0 22 22"><path d="M8 7.6 L16.2 15.8 M16.2 7.6 L8 15.8" stroke="#d02828" stroke-width="4.2" stroke-linecap="round"/><path d="M8 7.6 L16.2 15.8 M16.2 7.6 L8 15.8" stroke="#f43c3c" stroke-width="2.8" stroke-linecap="round"/></svg></div>
<div class="a" style="left:119px;top:583px;color:#3c3c3c;letter-spacing:0.38px">Отменить сборку/доставку</div>
<div style="position:absolute;left:65px;top:612px;width:645px;height:1px;background:#dcd5c1"></div>
<div style="position:absolute;left:82px;top:623px;width:22px;height:22px"><svg width="22" height="22" viewBox="0 0 22 22"><path d="M7.6 3.4 H13 L15.4 6 V10.4 H7.6 Z" fill="#fff" stroke="#5b7390" stroke-width="0.9"/><path d="M12.8 3.4 V6.2 H15.4" fill="none" stroke="#5b7390" stroke-width="0.8"/><rect x="3.6" y="10" width="17.2" height="8.6" rx="1.6" fill="#50739a" stroke="#3b5c82" stroke-width="0.8"/><rect x="7.6" y="13.6" width="9" height="7.2" fill="#fff" stroke="#56708e" stroke-width="0.9"/><rect x="17" y="11.2" width="1.4" height="1.2" fill="#fff"/><rect x="19" y="11.2" width="1.2" height="1.2" fill="#fff"/></svg></div>
<div class="a" style="left:119px;top:625px;color:#3c3c3c;letter-spacing:0.38px">Печать этикеток</div>
<div style="position:absolute;left:65px;top:654px;width:645px;height:1px;background:#dcd5c1"></div>
<div style="position:absolute;left:82px;top:665px;width:22px;height:22px"><svg width="22" height="22" viewBox="0 0 22 22"><path d="M7.3 10 V6.6 A4.2 4.2 0 0 1 15.7 6.6 V10" fill="none" stroke="#7a7a7a" stroke-width="1.5"/><path d="M8.7 10 V6.8 A2.8 2.8 0 0 1 14.3 6.8 V10" fill="none" stroke="#c8c8c8" stroke-width="0.7"/><rect x="4.8" y="9.6" width="13.6" height="11.2" rx="1.6" fill="#d6b640" stroke="#a88428" stroke-width="1"/><rect x="9.6" y="10.6" width="4" height="9.2" fill="#ecd888" opacity="0.7"/></svg></div>
<div class="a" style="left:119px;top:667px;color:#3c3c3c;letter-spacing:0.38px">Закрыть заказы</div>
<!--/MENU-->

<!--FOOTER-->
<div class="a" style="left:12px;top:855px;color:#333">См. также:</div>
<div class="a" style="left:99px;top:855px;color:#2452a8;text-decoration:underline;text-underline-offset:2px;text-decoration-skip-ink:none">Документы продажи (оформленные накладные)</div>
<svg style="position:absolute;left:511px;top:854px" width="20" height="20" viewBox="0 0 20 20"><defs><clipPath id="rr"><rect x="0" y="0" width="20" height="20" rx="4.5"/></clipPath></defs><g clip-path="url(#rr)"><rect width="20" height="20" fill="#0b5cff"/><path d="M4 20 L4 14 L20 11 L20 20 Z" fill="#f5104f"/><ellipse cx="10.2" cy="10.4" rx="8.2" ry="5.8" transform="rotate(-14 10.2 10.4)" fill="#fff"/><ellipse cx="10.2" cy="10.4" rx="5.6" ry="3.3" transform="rotate(-14 10.2 10.4)" fill="#f5104f"/></g></svg>
<div class="a" style="left:538px;top:855px;color:#2452a8;text-decoration:underline;text-underline-offset:2px;text-decoration-skip-ink:none">Заказы на торговой площадке</div>
<!--/FOOTER-->

</body></html>
